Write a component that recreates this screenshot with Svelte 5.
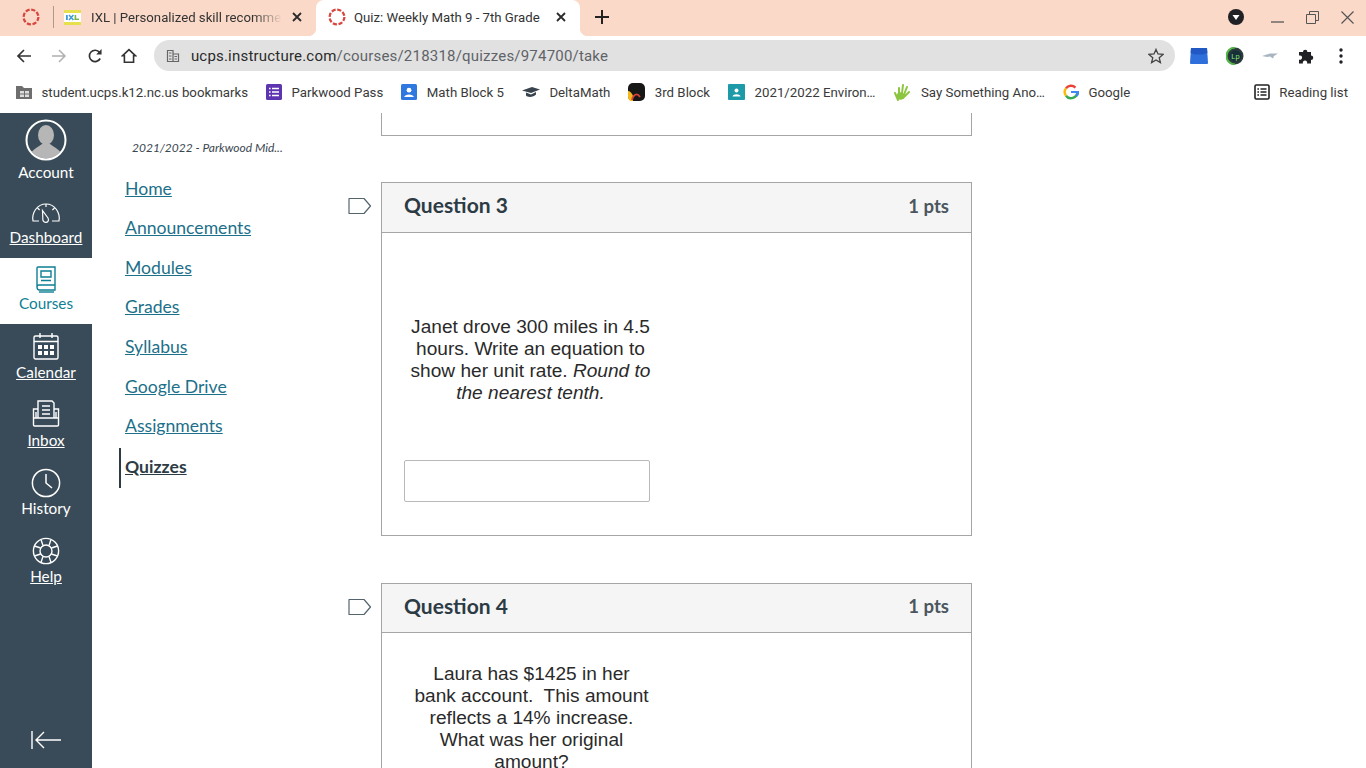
<script>
const bookmarks = [
	{ name: 'Parkwood Pass', icon: 'form' },
	{ name: 'Math Block 5', icon: 'classroom' },
	{ name: 'DeltaMath', icon: 'cap' },
	{ name: '3rd Block', icon: 'block' },
	{ name: '2021/2022 Environ…', icon: 'teal' },
	{ name: 'Say Something Ano…', icon: 'hand' },
	{ name: 'Google', icon: 'google' }
];

const courseLinks = ['Home', 'Announcements', 'Modules', 'Grades', 'Syllabus', 'Google Drive', 'Assignments', 'Quizzes'];
</script>

{#snippet canvasLogo()}
	<svg class="tab-logo" viewBox="0 0 18 18" width="18" height="18">
		<circle cx="9" cy="9" r="7.4" fill="none" stroke="#d8473f" stroke-width="2.3" stroke-dasharray="4.2 1.61" />
	</svg>
{/snippet}

{#snippet closeIcon()}
	<svg class="tab-close" viewBox="0 0 10 10" width="10" height="10">
		<path d="M1 1 L9 9 M9 1 L1 9" stroke="#2a2a2a" stroke-width="1.8" />
	</svg>
{/snippet}

{#snippet tagIcon()}
	<svg class="tag" viewBox="0 0 24 18" width="24" height="18">
		<path d="M1 1.5 H16 L22.5 9 L16 16.5 H1 Z" fill="#fff" stroke="#55656f" stroke-width="1.2" stroke-linejoin="round" />
	</svg>
{/snippet}

<div class="browser">
	<div class="tabstrip">
		<div class="pinned">{@render canvasLogo()}</div>
		<div class="tab-sep"></div>
		<div class="tab">
			<svg viewBox="0 0 17 15" width="17" height="15">
				<rect width="17" height="15" fill="#e6e04c" />
				<rect y="3" width="17" height="9" fill="#fff" />
				<rect x="2" y="5" width="1.8" height="5" fill="#3d9bd6" />
				<path d="M5 5 L9.4 10 M9.4 5 L5 10" stroke="#3d9bd6" stroke-width="1.5" />
				<rect x="10.6" y="5" width="1.6" height="5" fill="#7cb342" />
				<rect x="10.6" y="8.6" width="4.4" height="1.4" fill="#7cb342" />
			</svg>
			<span class="tab-title fade">IXL | Personalized skill recommen</span>
			{@render closeIcon()}
		</div>
		<div class="tab active">
			{@render canvasLogo()}
			<span class="tab-title">Quiz: Weekly Math 9 - 7th Grade</span>
			{@render closeIcon()}
		</div>
		<svg class="new-tab" viewBox="0 0 14 14" width="14" height="14">
			<path d="M7 0 V14 M0 7 H14" stroke="#222" stroke-width="2" />
		</svg>
		<div class="strip-right">
			<svg viewBox="0 0 16 16" width="16" height="16">
				<circle cx="8" cy="8" r="8" fill="#202124" />
				<path d="M4.5 6 H11.5 L8 11 Z" fill="#fff" />
			</svg>
			<svg class="win-min" viewBox="0 0 13 12" width="13" height="12"><path d="M0 11 H13" stroke="#555" stroke-width="1.3" /></svg>
			<svg class="win-max" viewBox="0 0 13 13" width="13" height="13">
				<path d="M3.5 3.5 V0.5 H12.5 V9.5 H9.5 M0.5 3.5 H9.5 V12.5 H0.5 Z" fill="none" stroke="#555" stroke-width="1" />
			</svg>
			<svg class="win-close" viewBox="0 0 13 13" width="13" height="13"><path d="M0.5 0.5 L12.5 12.5 M12.5 0.5 L0.5 12.5" stroke="#555" stroke-width="1.2" /></svg>
		</div>
	</div>

	<div class="toolbar">
		<svg viewBox="0 0 16 16" width="16" height="16"><path d="M15 8 H2 M8 2 L2 8 L8 14" fill="none" stroke="#333" stroke-width="1.7" /></svg>
		<svg class="nav-fwd" viewBox="0 0 16 16" width="16" height="16"><path d="M1 8 H14 M8 2 L14 8 L8 14" fill="none" stroke="#b0b0b0" stroke-width="1.5" /></svg>
		<svg class="nav-reload" viewBox="0 0 16 16" width="16" height="16"><path d="M13.2 10.5 A5.7 5.7 0 1 1 12.6 4.4" fill="none" stroke="#333" stroke-width="1.7" /><path d="M14.6 1 V6.4 H9.2 Z" fill="#333" /></svg>
		<svg class="nav-home" viewBox="0 0 16 16" width="16" height="16"><path d="M8 1.6 L14.6 7.8 H12.6 V14.2 H3.4 V7.8 H1.4 Z" fill="none" stroke="#333" stroke-width="1.6" /></svg>
		<div class="omnibox">
			<svg viewBox="0 0 14 14" width="14" height="14">
				<path d="M1.5 1.5 H7 V12.5 H1.5 Z M7 5 H12.5 V12.5 H7" fill="none" stroke="#666" stroke-width="1.2" />
				<path d="M3 4 H5.5 M3 7 H5.5 M3 10 H5.5 M8.5 7.5 H11 M8.5 10 H11" stroke="#666" stroke-width="1.2" />
			</svg>
			<span class="url"><b>ucps.instructure.com</b>/courses/218318/quizzes/974700/take</span>
			<svg class="star" viewBox="0 0 16 16" width="16" height="16">
				<path d="M8 1.4 L10 6 L15 6.4 L11.2 9.7 L12.4 14.6 L8 12 L3.6 14.6 L4.8 9.7 L1 6.4 L6 6 Z" fill="none" stroke="#444" stroke-width="1.3" />
			</svg>
		</div>
		<div class="extensions">
			<svg viewBox="0 0 18 18" width="18" height="18">
				<path d="M1 1 H17 L18 16 Q18 17 17 17 H1 Q0 17 0 16 Z" fill="#2f6fdc" />
				<path d="M1 1 H17 L17.4 6 L13 7.5 H5 L0.6 6 Z" fill="#2258c4" />
			</svg>
			<svg viewBox="0 0 18 18" width="18" height="18">
				<circle cx="9" cy="9" r="8.5" fill="#2d3b3a" />
				<path d="M9 .5 A8.5 8.5 0 0 0 9 17.5" fill="none" stroke="#53b948" stroke-width="2" />
				<circle cx="9.5" cy="9" r="5.8" fill="#16303a" />
				<text x="9.5" y="11.6" font-size="7.5" fill="#8ee27c" text-anchor="middle" font-family="Roboto, sans-serif">Lp</text>
			</svg>
			<svg viewBox="0 0 18 18" width="18" height="18">
				<path d="M1 9 L9 6.5 L17 6.5 L13 9 L12 11.5 L9 9.5 L6 10 Z" fill="#a9b6c2" />
			</svg>
			<svg viewBox="0 0 18 18" width="18" height="18">
				<path d="M2 5 H6 A2.2 2.2 0 1 1 10.4 5 H14 V8.5 A2.2 2.2 0 1 1 14 13 V16.5 H10 A2.2 2.2 0 1 0 6 16.5 H2 V12.6 A2.2 2.2 0 1 0 2 8.6 Z" fill="#202124" />
			</svg>
			<svg viewBox="0 0 18 18" width="18" height="18">
				<circle cx="9" cy="3" r="1.7" fill="#202124" /><circle cx="9" cy="9" r="1.7" fill="#202124" /><circle cx="9" cy="15" r="1.7" fill="#202124" />
			</svg>
		</div>
	</div>

	<div class="bookmarks">
		<div class="bm first">
			<svg viewBox="0 0 16 14" width="16" height="14">
				<path d="M0 1 H6 L8 3 H16 V14 H0 Z" fill="#6e6e6e" />
				<rect x="4" y="6" width="9" height="6" fill="#ddd" />
				<path d="M8.5 6 V12 M4 9 H13" stroke="#6e6e6e" />
			</svg>
			<span>student.ucps.k12.nc.us bookmarks</span>
		</div>
		{#each bookmarks as b}
			<div class="bm">
				{#if b.icon === 'form'}
					<svg viewBox="0 0 16 16" width="16" height="16">
						<rect width="16" height="16" rx="1.5" fill="#5e35b1" />
						<path d="M6 4.5 H13 M6 8 H13 M6 11.5 H13 M3 4.5 H4.6 M3 8 H4.6 M3 11.5 H4.6" stroke="#fff" stroke-width="1.4" />
					</svg>
				{:else if b.icon === 'classroom'}
					<svg viewBox="0 0 16 16" width="16" height="16">
						<rect width="16" height="16" rx="1.5" fill="#2f78e0" />
						<circle cx="8" cy="6.2" r="2.4" fill="#fff" />
						<path d="M3.2 13 C3.6 9.6 12.4 9.6 12.8 13 Z" fill="#fff" />
					</svg>
				{:else if b.icon === 'cap'}
					<svg viewBox="0 0 18 14" width="18" height="14">
						<path d="M0 5.5 L10 2 L18 4.5 L9 8 Z" fill="#38434d" />
						<path d="M4 7.5 V10.5 C6 13 12 12 14 9.5 V7 L9 9.5 Z" fill="#38434d" />
					</svg>
				{:else if b.icon === 'block'}
					<svg viewBox="0 0 17 18" width="17" height="18">
						<rect width="17" height="18" rx="5" fill="#171717" />
						<path d="M0 8 C2 8 4 10 5 13 L5 18 H4 C1 18 0 16 0 13 Z" fill="#f5b81f" />
						<path d="M4 17 C5 12 9 9 12 14" fill="none" stroke="#d8433a" stroke-width="1.8" />
					</svg>
				{:else if b.icon === 'teal'}
					<svg viewBox="0 0 17 16" width="17" height="16">
						<rect width="17" height="16" rx="1" fill="#1d9aa7" />
						<circle cx="8.5" cy="6.4" r="2" fill="#fff" />
						<path d="M4.5 12.4 C5 9.6 12 9.6 12.5 12.4 Z" fill="#fff" />
					</svg>
				{:else if b.icon === 'hand'}
					<svg viewBox="0 0 18 18" width="18" height="18">
						<path d="M5 17 L2 10 M6 15 L6 5 M8.5 14 L10 2 M10 14 L14 4 M10 15 L16 9" stroke="#8cc63f" stroke-width="2" stroke-linecap="round" />
						<circle cx="7.5" cy="13" r="3.8" fill="#8cc63f" />
					</svg>
				{:else}
					<svg viewBox="0 0 16 16" width="16" height="16">
						<path d="M14.2 8 A6.2 6.2 0 0 1 3 11.7" fill="none" stroke="#34a853" stroke-width="2.4" />
						<path d="M3 11.7 A6.2 6.2 0 0 1 3 4.3" fill="none" stroke="#fbbc05" stroke-width="2.4" />
						<path d="M3 4.3 A6.2 6.2 0 0 1 12.4 3.6" fill="none" stroke="#ea4335" stroke-width="2.4" />
						<path d="M8 8 H15.2 C15.2 10 14.6 11 13.4 12" fill="none" stroke="#4285f4" stroke-width="2.2" />
					</svg>
				{/if}
				<span>{b.name}</span>
			</div>
		{/each}
		<div class="bm reading">
			<svg viewBox="0 0 16 16" width="16" height="16">
				<rect x="1" y="1" width="14" height="14" rx="1.2" fill="none" stroke="#222" stroke-width="1.6" />
				<path d="M6.5 5 H12.5 M6.5 8 H12.5 M6.5 11 H12.5 M3.4 5 H5 M3.4 8 H5 M3.4 11 H5" stroke="#222" stroke-width="1.3" />
			</svg>
			<span>Reading list</span>
		</div>
	</div>

	<div class="page">
		<nav class="globalnav">
			<div class="gn-item account">
				<svg viewBox="0 0 42 42" width="42" height="42">
					<defs><clipPath id="avatar"><circle cx="21" cy="21" r="18.4" /></clipPath></defs>
					<circle cx="21" cy="21" r="18.4" fill="#394b58" />
					<g clip-path="url(#avatar)" fill="#b6b6b6">
						<ellipse cx="21" cy="16" rx="8" ry="10" />
						<path d="M4 40 C5 30 14 28 17 25 H25 C28 28 37 30 38 40 Z" />
					</g>
					<circle cx="21" cy="21" r="19.5" fill="none" stroke="#fff" stroke-width="2" />
				</svg>
				<span>Account</span>
			</div>
			<div class="gn-item dashboard">
				<svg viewBox="0 0 30 24" width="30" height="24" fill="none" stroke="#fff" stroke-width="1.2">
					<path d="M8 20 H2 C0.5 12 6 3 15 3 C24 3 29.5 12 28 20 H21" />
					<path d="M11.5 9.5 L17 17 C18.4 20 16.4 21.6 14.6 21.4 C12.8 21.2 11.4 19.6 11.8 17 Z" />
					<path d="M15 3 V6 M6.5 7 L8.6 9 M23.5 7 L21.4 9" />
				</svg>
				<span class="u">Dashboard</span>
			</div>
			<div class="gn-item courses">
				<svg viewBox="0 0 24 27" width="24" height="27" fill="none" stroke="#0e7f94" stroke-width="1.4">
					<path d="M3 21 V2 C3 1.4 3.4 1 4 1 H21 V19 H5 C3.8 19 3 20 3 21 C3 23 4 24 5.5 24 H21 V19" />
					<path d="M7 5 H17 V11 H7 Z M7 14.5 H17" />
					<path d="M5 26 H20" />
				</svg>
				<span>Courses</span>
			</div>
			<div class="gn-item calendar">
				<svg viewBox="0 0 26 28" width="26" height="28" fill="none" stroke="#fff" stroke-width="1.4">
					<rect x="1" y="4" width="24" height="23" rx="1.5" />
					<path d="M1 9.5 H25 M7 1 V6 M19 1 V6" />
					<g fill="#fff" stroke="none">
						<rect x="5" y="13" width="4" height="4" /><rect x="11" y="13" width="4" height="4" /><rect x="17" y="13" width="4" height="4" />
						<rect x="5" y="19" width="4" height="4" /><rect x="11" y="19" width="4" height="4" /><rect x="17" y="19" width="4" height="4" />
					</g>
				</svg>
				<span class="u">Calendar</span>
			</div>
			<div class="gn-item inbox">
				<svg viewBox="0 0 28 27" width="28" height="27" fill="none" stroke="#fff" stroke-width="1.4">
					<path d="M6 18 V1 H20 L22 3 V18" />
					<path d="M10 6 H18 M10 10 H18 M10 14 H18" />
					<path d="M6 9 H1.5 V25 C1.5 25.6 2 26 2.6 26 H25.4 C26 26 26.5 25.6 26.5 25 V9 H22" />
					<path d="M1.5 18 H26.5 M4 12 V18 M24 12 V18" />
				</svg>
				<span class="u">Inbox</span>
			</div>
			<div class="gn-item history">
				<svg viewBox="0 0 30 30" width="30" height="30" fill="none" stroke="#fff" stroke-width="1.5">
					<circle cx="15" cy="15" r="13.6" />
					<path d="M15 6 V15 L21 20" />
				</svg>
				<span>History</span>
			</div>
			<div class="gn-item help">
				<svg viewBox="0 0 28 28" width="28" height="28" fill="none" stroke="#fff" stroke-width="1.4">
					<circle cx="14" cy="14" r="12.6" />
					<circle cx="14" cy="14" r="6" />
					<path d="M9 2.5 L11 8.6 M19 2.5 L17 8.6 M25.5 9 L19.4 11 M25.5 19 L19.4 17 M19 25.5 L17 19.4 M9 25.5 L11 19.4 M2.5 19 L8.6 17 M2.5 9 L8.6 11" />
				</svg>
				<span class="u">Help</span>
			</div>
			<div class="collapse">
				<svg viewBox="0 0 30 18" width="30" height="18" fill="none" stroke="#fff" stroke-width="1.4">
					<path d="M1 0 V18 M30 9 H5 M13 1 L5 9 L13 17" />
				</svg>
			</div>
		</nav>

		<aside class="coursenav">
			<div class="term">2021/2022 - Parkwood Mid...</div>
			<ul>
				{#each courseLinks as link}
					<li class:current={link === 'Quizzes'}><span>{link}</span></li>
				{/each}
			</ul>
		</aside>

		<main class="quiz">
			<div class="prev-box"></div>

			<section class="question q3">
				{@render tagIcon()}
				<header><h2>Question 3</h2><span class="pts">1 pts</span></header>
				<div class="q-body">
					<p class="img-text">Janet drove 300 miles in 4.5<br />hours. Write an equation to<br />show her unit rate. <i>Round to<br />the nearest tenth.</i></p>
					<div class="answer"></div>
				</div>
			</section>

			<section class="question q4">
				{@render tagIcon()}
				<header><h2>Question 4</h2><span class="pts">1 pts</span></header>
				<div class="q-body">
					<p class="img-text">Laura has $1425 in her<br />bank account.&nbsp; This amount<br />reflects a 14% increase.<br />What was her original<br />amount?</p>
				</div>
			</section>
		</main>
	</div>
</div>

<style>
:global(body) {
	margin: 0;
	overflow: hidden;
	background: #fff;
}

.browser {
	width: 1366px;
	height: 768px;
	display: flex;
	flex-direction: column;
	overflow: hidden;
	font-family: Roboto, "Liberation Sans", sans-serif;
	color: #333;
}

.tabstrip {
	height: 36px;
	flex: none;
	background: #fbd9c8;
	display: flex;
	align-items: center;
	padding-bottom: 2px;
	box-sizing: border-box;
}

.pinned {
	width: 52px;
	display: flex;
	justify-content: center;
	margin-left: 5px;
	margin-right: -4px;
}

.tab-sep {
	width: 1px;
	height: 22px;
	background: #b09a8e;
}

.tab {
	height: 36px;
	margin-bottom: -2px;
	width: 262px;
	display: flex;
	align-items: center;
	padding: 0 14px 2px 10px;
	box-sizing: border-box;
	gap: 10px;
	flex: none;
	position: relative;
}

.tab.active {
	background: #fff;
	width: 264px;
	border-radius: 8px 8px 0 0;
	padding: 0 14px 2px 12px;
	gap: 8px;
}

.tab.active::before,
.tab.active::after {
	content: "";
	position: absolute;
	bottom: 0;
	width: 8px;
	height: 8px;
}

.tab.active::before {
	left: -8px;
	background: radial-gradient(circle at 0 0, transparent 8px, #fff 8.5px);
}

.tab.active::after {
	right: -8px;
	background: radial-gradient(circle at 100% 0, transparent 8px, #fff 8.5px);
}

.tab-title {
	flex: 1;
	font-size: 13.2px;
	color: #333;
	white-space: nowrap;
	overflow: hidden;
	min-width: 0;
}

.tab-title.fade {
	-webkit-mask-image: linear-gradient(90deg, #000 85%, transparent);
	mask-image: linear-gradient(90deg, #000 85%, transparent);
}

.tab-close {
	flex: none;
}

.new-tab {
	margin-left: 15px;
}

.strip-right {
	margin-left: auto;
	display: flex;
	align-items: center;
	padding-right: 12px;
}

.win-min {
	margin-left: 27px;
}

.win-max {
	margin-left: 22px;
}

.win-close {
	margin-left: 22px;
}

.toolbar {
	height: 40px;
	flex: none;
	background: #fff;
	display: flex;
	align-items: center;
	padding: 0 16px 1px;
	box-sizing: border-box;
}

.nav-fwd {
	margin-left: 19px;
}

.nav-reload {
	margin-left: 20px;
}

.nav-home {
	margin-left: 18px;
}

.omnibox {
	margin-left: 17px;
	width: 1023px;
	height: 31px;
	background: #e1e1e1;
	border-radius: 16px;
	display: flex;
	align-items: center;
	padding: 0 11px 0 12px;
	box-sizing: border-box;
}

.url {
	margin-left: 11px;
	font-size: 15px;
	color: #5f6368;
	flex: 1;
	letter-spacing: 0.2px;
}

.url b {
	font-weight: 400;
	color: #2a2a2a;
}

.extensions {
	display: flex;
	align-items: center;
	gap: 17.5px;
	margin-left: 15px;
}

.bookmarks {
	height: 37px;
	flex: none;
	background: #fff;
	display: flex;
	align-items: center;
	padding: 0 18px 5px 16px;
	box-sizing: border-box;
	font-size: 13.25px;
	color: #3a3a3a;
}

.bm {
	display: flex;
	align-items: center;
	gap: 9.5px;
	margin-right: 18px;
	white-space: nowrap;
}

.bm.reading {
	margin: 0 0 0 auto;
}

.page {
	flex: 1;
	min-height: 0;
	display: flex;
	font-family: Lato, "Liberation Sans", sans-serif;
}

.globalnav {
	width: 92px;
	flex: none;
	background: #394b58;
	color: #fff;
	display: flex;
	flex-direction: column;
	align-items: stretch;
	font-size: 15.3px;
}

.gn-item {
	display: flex;
	flex-direction: column;
	align-items: center;
	line-height: 20px;
}

.gn-item .u {
	text-decoration: underline;
}

.account {
	height: 79px;
	padding-top: 6px;
	box-sizing: border-box;
}

.account span {
	margin-top: 1px;
}

.dashboard {
	height: 66px;
	padding-top: 9px;
	box-sizing: border-box;
}

.dashboard span {
	margin-top: 2px;
}

.courses {
	height: 66px;
	background: #fff;
	color: #0e7f94;
	padding-top: 8px;
	box-sizing: border-box;
}

.calendar {
	height: 68px;
	padding-top: 8px;
	box-sizing: border-box;
}

.calendar span {
	margin-top: 2px;
}

.inbox {
	height: 68px;
	padding-top: 8px;
	box-sizing: border-box;
}

.inbox span {
	margin-top: 3px;
}

.history {
	height: 68px;
	padding-top: 8px;
	box-sizing: border-box;
}

.help {
	height: 68px;
	padding-top: 9px;
	box-sizing: border-box;
}

.help span {
	margin-top: 1px;
}

.collapse {
	margin-top: auto;
	height: 47px;
	display: flex;
	justify-content: center;
	align-items: flex-start;
	padding-top: 10px;
	box-sizing: border-box;
}

.coursenav {
	width: 257px;
	flex: none;
	box-sizing: border-box;
	padding: 27px 0 0 27px;
}

.term {
	font-size: 12px;
	font-style: italic;
	color: #3a4650;
	line-height: 16px;
	margin-left: 13px;
}

.coursenav ul {
	list-style: none;
	margin: 12.8px 0 0;
	padding: 0;
}

.coursenav li {
	height: 39.55px;
	display: flex;
	align-items: flex-start;
	font-size: 17.6px;
	line-height: 24px;
	color: #1c7089;
	text-decoration: underline;
	padding: 8px 0 0 6px;
	box-sizing: border-box;
}

.coursenav li.current {
	color: #2d3b45;
	font-weight: 700;
	border-left: 2px solid #2d3b45;
	margin-top: 2px;
	padding: 7px 0 0 4px;
	height: 40px;
}

.quiz {
	width: 591px;
	flex: none;
	margin-left: 32px;
	box-sizing: border-box;
}

.prev-box {
	height: 23px;
	border: 1px solid #a5a5a5;
	border-top: none;
	box-sizing: border-box;
}

.question {
	position: relative;
	border: 1px solid #a5a5a5;
	box-sizing: border-box;
}

.q3 {
	margin-top: 46px;
	height: 354px;
}

.q4 {
	margin-top: 47px;
}

.tag {
	position: absolute;
	left: -34px;
	top: 14px;
}

.question header {
	height: 50px;
	background: #f5f5f5;
	border-bottom: 1px solid #a5a5a5;
	display: flex;
	align-items: center;
	justify-content: space-between;
	padding: 0 22px 4px;
	box-sizing: border-box;
	color: #2d3b45;
}

.q4 header {
	height: 49px;
}

.question h2 {
	margin: 0;
	font-size: 21px;
	font-weight: 700;
	line-height: 26px;
}

.q3 h2 {
	margin-bottom: 2px;
}

.pts {
	font-size: 18.6px;
	font-weight: 700;
	color: #4b565e;
}

.q-body {
	padding: 0 22px;
}

.img-text {
	margin: 0 0 0 -0.5px;
	width: 254px;
	text-align: center;
	font-family: "Liberation Sans", Arial, sans-serif;
	font-size: 19.1px;
	line-height: 22px;
	color: #2a2a2a;
}

.q3 .img-text {
	padding-top: 83px;
}

.q4 .img-text {
	margin-left: 0.5px;
	padding-top: 30px;
}

.answer {
	margin-top: 56px;
	width: 246px;
	height: 42px;
	border: 1px solid #b9b9b9;
	border-radius: 2px;
	box-sizing: border-box;
}
</style>
